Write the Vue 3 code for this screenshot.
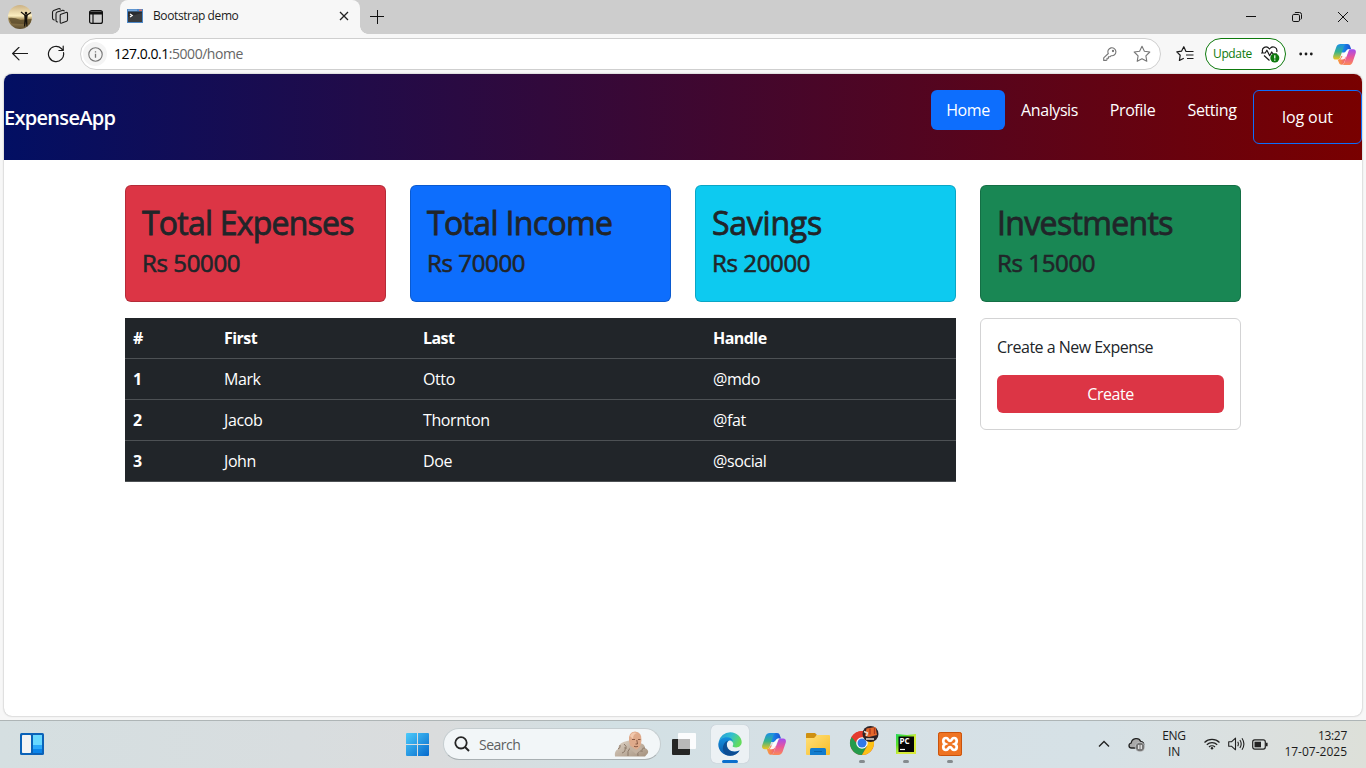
<script setup>
const cards = [
  { title: 'Total Expenses', value: 'Rs 50000', tone: 'danger' },
  { title: 'Total Income', value: 'Rs 70000', tone: 'primary' },
  { title: 'Savings', value: 'Rs 20000', tone: 'cyan' },
  { title: 'Investments', value: 'Rs 15000', tone: 'success' },
]
const rows = [
  ['1', 'Mark', 'Otto', '@mdo'],
  ['2', 'Jacob', 'Thornton', '@fat'],
  ['3', 'John', 'Doe', '@social'],
]
</script>

<template>
  <div class="screen">
    <svg class="defs" width="0" height="0" aria-hidden="true">
      <defs>
        <linearGradient id="cpA" x1="0" y1="0" x2="0" y2="1">
          <stop offset="0" stop-color="#1b8fe8" /><stop offset=".5" stop-color="#35b38a" /><stop offset="1" stop-color="#f5c51c" />
        </linearGradient>
        <linearGradient id="cpB" x1="0" y1="0" x2="0" y2="1">
          <stop offset="0" stop-color="#a24cf0" /><stop offset=".5" stop-color="#e8569c" /><stop offset="1" stop-color="#fb8a55" />
        </linearGradient>
        <linearGradient id="cpC" x1="0" y1="0" x2="1" y2="0">
          <stop offset="0" stop-color="#1798ec" /><stop offset="1" stop-color="#1c50d4" />
        </linearGradient>
        <linearGradient id="cpD" x1="0" y1="0" x2="1" y2="0">
          <stop offset="0" stop-color="#f9a13c" /><stop offset="1" stop-color="#ef5a78" />
        </linearGradient>
        <symbol id="copilot" viewBox="0 0 24 22">
          <path d="M8 0h7c1.600 0 2.400.8 2.800 2.200L19 5.500h-2.500c-1.500 0-2.300.8-2.800 2.300l-.4 1.200L9 9z" fill="url(#cpC)" />
          <path d="M8 0h5.500C12 .7 11.500 2 11 3.500L7.500 14c-.5 1.500-1.300 2.300-3 2.300H2.800C.5 16.300-.4 14.500.3 12L3.500 3C4.300 1 5.600 0 8 0z" fill="url(#cpA)" />
          <path d="M4.800 16.300c1.900 0 2.800-.8 3.300-2.500l.5-1.300 5.200.5L12 18.500c-.6 1.800-1.400 3-3 3.300-1.500 0-2.300-.6-2.700-1.800z" fill="url(#cpD)" />
          <path d="M19 5.500h2.200c2.300 0 3.200 1.800 2.500 4.200L20.700 18.500c-.8 2.300-2.100 3.500-4.500 3.500H9c2-.3 2.500-1.700 3.100-3.500L16 8c.5-1.600 1.300-2.500 3-2.500z" fill="url(#cpB)" />
          <path d="M14.200 7c.4-.8 1.200-1.500 2.800-1.500-1.500 1.500-3.200 8.500-4.600 9.700-.6.800-1.600 1.100-4.900 1.100 2-2 3.700-7.700 6.700-9.300z" fill="#fff" opacity=".92" />
        </symbol>
        <linearGradient id="win" x1="0" y1="0" x2="1" y2="1">
          <stop offset="0" stop-color="#4ccbfb" /><stop offset="1" stop-color="#0669cc" />
        </linearGradient>
        <linearGradient id="edgeA" x1="0" y1="0" x2="1" y2=".4">
          <stop offset="0" stop-color="#2598d8" /><stop offset=".55" stop-color="#32bfd0" /><stop offset="1" stop-color="#63dc5c" />
        </linearGradient>
        <linearGradient id="edgeB" x1="0" y1="0" x2="0" y2="1">
          <stop offset="0" stop-color="#1490df" /><stop offset="1" stop-color="#0a58a8" />
        </linearGradient>
        <linearGradient id="fold" x1="0" y1="0" x2="1" y2="1">
          <stop offset="0" stop-color="#ffe07a" /><stop offset="1" stop-color="#f8bd28" />
        </linearGradient>
        <linearGradient id="pc" x1="0" y1="0" x2="1" y2="1">
          <stop offset="0" stop-color="#21d759" /><stop offset=".3" stop-color="#5be32c" /><stop offset=".55" stop-color="#d5ee39" /><stop offset="1" stop-color="#d9e83a" />
        </linearGradient>
        <linearGradient id="sky" x1="0" y1="0" x2="0" y2="1">
          <stop offset="0" stop-color="#cbb184" /><stop offset=".45" stop-color="#fbeec0" /><stop offset=".6" stop-color="#a58d58" /><stop offset="1" stop-color="#5e4e30" />
        </linearGradient>
        <linearGradient id="fur" x1="0" y1="0" x2="1" y2="1">
          <stop offset="0" stop-color="#ded3c6" /><stop offset="1" stop-color="#a4917e" />
        </linearGradient>
      </defs>
    </svg>

    <header class="tabstrip">
      <div class="slot w40">
        <svg width="24" height="24" viewBox="0 0 24 24">
          <circle cx="12" cy="12" r="12" fill="url(#sky)" />
          <path d="M.5 13q5-1 12 2l11-1a12 12 0 0 1-2 5.500l-18-1z" fill="#5a4a2a" opacity=".75" />
          <path d="M13 7l4 3.200 1.500.1L23 7.500" stroke="#15110c" stroke-width="1.200" fill="none" />
          <path d="M16.200 9.500h3.600l-.6 5 .3 7h-1l-.7-5-.7 5h-1.200l.6-7z" fill="#15110c" />
          <circle cx="18" cy="8" r="1.300" fill="#15110c" />
        </svg>
      </div>
      <div class="slot w40">
        <svg width="18" height="18" viewBox="0 0 18 18" fill="none" stroke="#1b1b1b" stroke-width="1.100" stroke-linejoin="round" stroke-linecap="round">
          <path d="M9.200 7.300q0-.8.800-1.100l5-1.700q1.500-.4 1.500 1v6.300q0 1-.9 1.400l-4.800 1.900q-1.600.5-1.600-1z" />
          <path d="M6.600 14q-1.600-.3-1.600-1.600V6q0-1.400 1.200-1.900l5-1.700q1.400-.4 2 .5" />
          <path d="M3.200 12Q1.500 11.600 1.500 10V4.200q0-1.300 1.200-1.800l4.600-1.600q1.400-.4 2 .4" />
        </svg>
      </div>
      <div class="slot w32">
        <svg width="16" height="16" viewBox="0 0 16 16" fill="none" stroke="#111" stroke-width="1.200">
          <rect x="1.600" y="1.600" width="12.800" height="12.800" rx="2" />
          <path d="M2 3h12v2H2z" fill="#111" /><path d="M5 5v9.500" />
        </svg>
      </div>
      <div class="tab">
        <svg width="16" height="14" viewBox="0 0 16 14">
          <rect width="16" height="14" fill="#4d88c8" /><rect x="1" y="2.500" width="14" height="10.500" fill="#2a2c30" />
          <path d="M1 8l14-4v9H1z" fill="#414448" opacity=".7" /><rect x="12" y=".6" width="3" height="1.300" fill="#e86c5c" />
          <path d="M1 1.200h9" stroke="#9bc2ea" stroke-width=".8" /><path d="M3 5l2.200 1.500L3 8" stroke="#fff" stroke-width="1.200" fill="none" />
        </svg>
        <span class="tab-title">Bootstrap demo</span>
        <svg width="10" height="10" viewBox="0 0 10 10" stroke="#222" stroke-width="1.300"><path d="M1 1l8 8M9 1L1 9" /></svg>
      </div>
      <div class="slot w34">
        <svg width="14" height="14" viewBox="0 0 14 14" stroke="#111" stroke-width="1"><path d="M7.500 0v14M0 6.500h14" /></svg>
      </div>
      <div class="grow"></div>
      <div class="slot w46"><svg width="10" height="10" viewBox="0 0 10 10" stroke="#111"><path d="M0 4.500h10" /></svg></div>
      <div class="slot w46">
        <svg width="10" height="10" viewBox="0 0 10 10" fill="none" stroke="#111"><rect x=".5" y="2.500" width="7" height="7" rx="1.300" /><path d="M2.500 1.200Q2.800.5 4 .5h3.500a2 2 0 0 1 2 2V6q0 1-.8 1.500" /></svg>
      </div>
      <div class="slot w46"><svg width="10" height="10" viewBox="0 0 10 10" stroke="#111"><path d="M0 0l10 10M10 0L0 10" /></svg></div>
    </header>

    <div class="toolbar">
      <div class="slot w40">
        <svg width="16" height="14" viewBox="0 0 16 14" fill="none" stroke="#1b1b1b" stroke-width="1.200" stroke-linecap="round"><path d="M15.500 6.500H.8M7 .3L.7 6.500 7 12.800" /></svg>
      </div>
      <div class="slot w32">
        <svg width="18" height="18" viewBox="0 0 18 18" fill="none" stroke="#1b1b1b" stroke-width="1.200" stroke-linecap="round"><path d="M16.500 7.500A7.600 7.600 0 1 1 14.300 3.500L16 5.300M16.200 1.200v4.300h-4.300" /></svg>
      </div>
      <div class="address">
        <span class="site-info">
          <svg width="15" height="15" viewBox="0 0 15 15" fill="none" stroke="#767676" stroke-width="1.100"><circle cx="7.500" cy="7.500" r="6.700" /><path d="M7.500 6.700v4M7.500 4.200v1.300" stroke-width="1.300" /></svg>
        </span>
        <span class="url"><b>127.0.0.1</b>:5000/home</span>
        <div class="grow"></div>
        <svg width="14" height="14" viewBox="0 0 14 14" fill="none" stroke="#767676" stroke-width="1.100" stroke-linejoin="round"><path d="M5.300 6.500A4 4 0 1 1 8.200 8.700L7 9.800H5.500v1.500H4v1.500l-.7.600H.7v-2.500z" /><circle cx="10" cy="4" r=".6" /></svg>
        <svg class="star" width="18" height="18" viewBox="0 0 18 18" fill="none" stroke="#767676" stroke-width="1.100" stroke-linejoin="round"><path d="M9 1.200l2.400 5 5.400.8-3.900 3.800.9 5.500L9 13.700l-4.800 2.600.9-5.500L1.200 7l5.400-.8z" /></svg>
      </div>
      <div class="slot w32 fav">
        <svg width="18" height="18" viewBox="0 0 18 18" fill="none" stroke="#1b1b1b" stroke-width="1.200" stroke-linejoin="round"><path d="M17.500 6.500H10L7.800 1.700 5.500 6.200l-4.700.7 3.400 3.300-.8 5.300 4.400-2.300M10 10h7.500M11 13.500h6.500" /></svg>
      </div>
      <div class="update">
        <span>Update</span>
        <svg width="19" height="17" viewBox="0 0 19 17" fill="none" stroke="#1b1b1b" stroke-width="1.200" stroke-linejoin="round">
          <path d="M1.700 6.500C0 1.500 5.500-1 8.500 3 11.500-1 17 1.500 15.700 6M3 9.500l5.500 5M0 7h4.200l1.700-2.800 2.800 5.500 2-3.700 1.400 2H16" />
          <circle cx="13.800" cy="12" r="4.500" fill="#0e7a0d" stroke="none" /><path d="M13.800 9.200v3.200M13.800 13.500v1.200" stroke="#fff" />
        </svg>
      </div>
      <div class="slot w40"><svg width="14" height="4" viewBox="0 0 14 4" fill="#1b1b1b"><circle cx="1.700" cy="2" r="1.400" /><circle cx="7" cy="2" r="1.400" /><circle cx="12.300" cy="2" r="1.400" /></svg></div>
      <div class="slot w36"><svg width="23" height="21"><use href="#copilot" /></svg></div>
    </div>

    <main class="page">
      <nav class="navbar">
        <span class="brand">ExpenseApp</span>
        <div class="pills">
          <a class="pill active">Home</a><a class="pill">Analysis</a><a class="pill">Profile</a><a class="pill">Setting</a><a class="logout">log out</a>
        </div>
      </nav>
      <div class="container">
        <section v-for="c in cards" :key="c.title" class="card" :class="c.tone">
          <h2>{{ c.title }}</h2>
          <h4>{{ c.value }}</h4>
        </section>
        <table class="table">
          <colgroup><col class="c1" /><col class="c2" /><col class="c3" /><col class="c4" /></colgroup>
          <thead><tr><th>#</th><th>First</th><th>Last</th><th>Handle</th></tr></thead>
          <tbody>
            <tr v-for="r in rows" :key="r[0]"><th>{{ r[0] }}</th><td>{{ r[1] }}</td><td>{{ r[2] }}</td><td>{{ r[3] }}</td></tr>
          </tbody>
        </table>
        <section class="create">
          <p>Create a New Expense</p>
          <button>Create</button>
        </section>
      </div>
    </main>

    <footer class="taskbar">
      <div class="left">
        <svg width="24" height="22" viewBox="0 0 24 22"><rect width="24" height="22" rx="1.500" fill="#0b62b8" /><rect x="2" y="2" width="9" height="18" rx=".8" fill="#f4f4f4" /><rect x="13" y="2" width="9" height="10" fill="#68d8ff" /><rect x="13" y="12" width="9" height="4" fill="#2aa8fa" /><rect x="13" y="16" width="9" height="4" fill="#0a84ea" /></svg>
      </div>
      <div class="slot start"><svg width="23" height="23" viewBox="0 0 23 23" fill="url(#win)"><path d="M1 0h10v11H0V1q0-1 1-1zM12 0h10q1 0 1 1v10H12zM0 12h11v11H1q-1 0-1-1zM12 12h11v10q0 1-1 1H12z" /></svg></div>
      <div class="search">
        <svg width="16" height="16" viewBox="0 0 16 16" fill="none" stroke="#252525" stroke-width="1.800"><circle cx="7" cy="6.800" r="5.700" /><path d="M11 11l4 4" stroke-width="2" /></svg>
        <span>Search</span>
        <svg class="sage" width="35" height="26" viewBox="0 0 35 26">
          <path d="M1 25.500Q0 20 4 18q1-7 9-8l4-1 9 3q5 1 5 5 4 2 3 5l-3 3.500z" fill="url(#fur)" />
          <path d="M4 18q3-1 2-4M8 22q4-1 3-6M14 25q-1-5 2-8M27 20q-4-1-3 5M31 17q-4 0-3 4M10 13q3 2 2 5" stroke="#8b7868" stroke-width="1" fill="none" />
          <path d="M15 10Q14 1 21 .5q7 .5 6.500 8.500Q27 17 22.500 19 16 19 15 10z" fill="#dfaa8b" />
          <path d="M16 5Q18 0 23 2q-4 1-4 6z" fill="#f2c9ae" />
          <path d="M18 8.500h3M24 8.500h2.500M22.800 9l.7 4h-2M20 15.300q2 1 4 0" stroke="#80513c" stroke-width=".9" fill="none" />
          <path d="M15 17l7 6 6-5-1-3-4.500 4-6-4z" fill="#c3b1a0" />
        </svg>
      </div>
      <div class="slot taskview"><svg width="24" height="24" viewBox="0 0 24 24"><rect y="7" width="18" height="16" rx="1" fill="#252625" /><rect x="6" y="1" width="18" height="16" rx="1" fill="#fff" opacity=".9" /><path d="M6 7h12v10H6z" fill="#b9b9b9" /></svg></div>
      <div class="slot app focus">
        <svg width="24" height="24" viewBox="0 0 24 24">
          <path d="M.6 10A11.800 11.800 0 0 1 12.300.2C19 .2 23.900 5.500 23.700 10.300c-.2 3.300-2.700 5.200-5.500 5.200-2.700 0-4-.8-3.500-1.700.7-1 .8-2.300-.1-3.500C12 7 5 5 .6 10z" fill="url(#edgeA)" />
          <path d="M.3 12C.8 7.500 5 5.200 9 5.200c3 0 5.200 1.600 6 3.800-3-2-6.500.5-6.300 4.500.2 5 5.500 7.500 12.800 5-2 3.200-5 5.300-9.300 5.300C5.200 23.800 0 18.500.3 12z" fill="url(#edgeB)" />
          <path d="M8 23C3 19 4 11 10 8.500c-2.500 3.500-1 9 4 11 2.500 1 5.500.3 7.800-1.300-2.500 4.500-8 6.700-13.800 4.800z" fill="#0c4a8e" opacity=".85" />
        </svg>
        <i class="mark"></i>
      </div>
      <div class="slot app"><svg width="24" height="22"><use href="#copilot" /></svg></div>
      <div class="slot app">
        <svg width="24" height="22" viewBox="0 0 24 22"><path d="M0 1q0-1 1-1h8l2 2h-.5V5H0z" fill="#cf9011" /><path d="M0 5h8l3-3h12q1 0 1 1v18q0 1-1 1H1q-1 0-1-1z" fill="url(#fold)" /><path d="M4 22v-5.500Q4 15 5.500 15h13q1.500 0 1.500 1.500V22z" fill="#127cce" /><path d="M8 18.500h8" stroke="#0864ad" /></svg>
      </div>
      <div class="slot app">
        <svg class="chrome" width="30" height="30" viewBox="0 0 30 30">
          <circle cx="13" cy="17" r="12" fill="#e43b2e" />
          <path d="M2.600 11a12 12 0 0 0 10.400 18l5.200-9.500L13 17z" fill="#249b4b" /><path d="M13 29a12 12 0 0 0 10.400-18L13 11.500l5.200 8.500z" fill="#fbc116" />
          <path d="M2.600 11A12 12 0 0 1 23.400 11H13q-5 0-5.500 6z" fill="#e43b2e" />
          <circle cx="13" cy="17" r="5.800" fill="#fff" /><circle cx="13" cy="17" r="4.500" fill="#3079e8" />
          <circle cx="21.500" cy="8" r="8" fill="#2b2227" />
          <path d="M17.500 2.500l9-1.500 1.500 8-8 2-4-1z" fill="#e5672b" />
          <path d="M15 5.500l3.500 1.500-1 3M17 13h8" stroke="#e8dcd4" stroke-width="1.400" fill="none" />
          <path d="M21 2.500v6M25.500 2v6" stroke="#a9381b" stroke-width="1.300" />
        </svg>
        <i class="dot"></i>
      </div>
      <div class="slot app">
        <svg width="22" height="22" viewBox="0 0 22 22"><path d="M1 1l11 1 9-1v20H1z" fill="url(#pc)" /><rect x="3.500" y="3.500" width="15.500" height="15.500" fill="#050505" /><text x="4.500" y="11" class="pc">PC</text><path d="M5 16.500h5" stroke="#fff" stroke-width="1.200" /></svg>
        <i class="dot"></i>
      </div>
      <div class="slot app">
        <svg width="24" height="24" viewBox="0 0 24 24"><rect width="24" height="24" rx="2.500" fill="#ef7423" /><rect x=".5" y=".5" width="23" height="23" rx="2" fill="none" stroke="#c9530d" /><path d="M8 6C10.800 6 9.800 8.800 12 8.800S13.200 6 16 6c3.500 0 3.500 4.800.8 6 2.700 1.200 2.700 6-.8 6-2.800 0-1.800-2.800-4-2.800S10.800 18 8 18c-3.500 0-3.500-4.800-.8-6C4.500 10.800 4.500 6 8 6z" fill="none" stroke="#fff" stroke-width="2.700" /></svg>
        <i class="dot"></i>
      </div>
      <div class="grow"></div>
      <div class="slot w32"><svg width="12" height="8" viewBox="0 0 12 8" fill="none" stroke="#222" stroke-width="1.400"><path d="M1 6.500l5-5 5 5" /></svg></div>
      <div class="slot w32">
        <svg width="17" height="15" viewBox="0 0 17 15"><path d="M3.500 11C.5 11 0 7 3.200 6 4 1 11 0 12.500 4.300c2.500 0 4 2.500 3 5L10 11z" fill="#aaa" stroke="#222" stroke-width="1.300" /><circle cx="12" cy="10" r="4.800" fill="#777" stroke="#dde3e5" stroke-width=".6" /><path d="M10.800 8v4M13.200 8v4" stroke="#fff" stroke-width="1.100" /></svg>
      </div>
      <div class="lang"><span>ENG</span><span>IN</span></div>
      <div class="slot w24">
        <svg width="16" height="12" viewBox="0 0 16 12" fill="none" stroke="#222" stroke-width="1.200"><path d="M.5 4.500a10.500 10.500 0 0 1 15 0M2.800 6.800a7.400 7.400 0 0 1 10.400 0M5 9a4.200 4.200 0 0 1 6 0" /><circle cx="8" cy="10.300" r="1.200" fill="#222" stroke="none" /></svg>
      </div>
      <div class="slot w24">
        <svg width="17" height="14" viewBox="0 0 17 14" fill="none" stroke="#222" stroke-width="1.100" stroke-linejoin="round"><path d="M.7 4.700h3L7.500 1.200v11.600L3.700 9.300h-3zM9.700 4.700q1.400 2.300 0 4.600M11.900 3q2.600 4 0 8M14 1.300q3.800 5.700 0 11.400" /></svg>
      </div>
      <div class="slot w24">
        <svg width="16" height="11" viewBox="0 0 16 11" fill="none" stroke="#222" stroke-width="1.200"><rect x=".7" y=".9" width="12.600" height="9.200" rx="2" /><rect x="2.500" y="2.700" width="6.500" height="5.600" fill="#222" stroke="none" /><path d="M14.800 3.800v3.400" stroke-width="1.600" /></svg>
      </div>
      <div class="clock"><span>13:27</span><span class="date">17-07-2025</span></div>
    </footer>
  </div>
</template>

<style>
body { margin: 0; overflow: hidden; }
</style>

<style scoped>
* { box-sizing: border-box; }
.screen { width: 1366px; height: 768px; display: flex; flex-direction: column; background: #f7f7f7; font-family: "Open Sans", "Noto Sans", sans-serif; color: #212529; overflow: hidden; }
.defs { position: absolute; }
svg { display: block; flex: none; }
.slot { display: flex; align-items: center; justify-content: center; flex: none; }
.w24 { width: 24px; } .w32 { width: 32px; } .w34 { width: 34px; } .w36 { width: 36px; } .w40 { width: 40px; } .w46 { width: 46px; }
.grow { flex: 1; }

.tabstrip { height: 34px; display: flex; background: #cdcdcd; flex: none; }
.tabstrip .slot { height: 33px; }
.tab { position: relative; width: 240px; margin-left: 8px; padding: 0 11px 2px 7px; display: flex; align-items: center; background: #f7f7f7; border-radius: 8px 8px 0 0; font-size: 12px; color: #1b1b1b; }
.tab::before, .tab::after { content: ""; position: absolute; bottom: 0; width: 8px; height: 8px; }
.tab::before { left: -8px; background: radial-gradient(circle at 0 0, transparent 7.500px, #f7f7f7 8px); }
.tab::after { right: -8px; background: radial-gradient(circle at 100% 0, transparent 7.500px, #f7f7f7 8px); }
.tab-title { margin-left: 10px; flex: 1; padding-bottom: 1px; white-space: nowrap; letter-spacing: -0.390px; }

.toolbar { height: 40px; display: flex; align-items: center; flex: none; }
.address { width: 1081px; height: 32px; margin-left: 8px; padding: 0 9px 0 2px; display: flex; align-items: center; background: #fff; border: 1px solid #cfcfcf; border-radius: 16px; }
.site-info { width: 24px; height: 24px; border-radius: 50%; background: #f4f4f4; display: flex; align-items: center; justify-content: center; }
.url { margin-left: 7px; padding-bottom: 2px; font-size: 14px; color: #666; letter-spacing: -0.470px; white-space: nowrap; }
.url b { font-weight: 400; color: #000; }
.star { margin-left: 16px; }
.fav { margin-left: 8px; }
.update { width: 81px; height: 32px; margin-left: 4px; padding: 0 5px 0 7px; display: flex; align-items: center; justify-content: space-between; border: 1px solid #0e7a0d; border-radius: 16px; background: #fff; font-size: 12px; color: #0e7a0d; letter-spacing: -0.360px; }
.update span { padding-bottom: 2px; }

.page { height: 642px; margin: 0 4px; background: #fff; border-radius: 8px; overflow: hidden; box-shadow: 0 0 2px rgba(0, 0, 0, .35); flex: none; }
.navbar { height: 86px; display: flex; justify-content: space-between; background: linear-gradient(90deg, #020f63, #790000); font-size: 16px; color: #fff; }
.brand { align-self: center; padding-top: 1px; font-size: 20px; font-weight: 600; letter-spacing: -0.700px; }
.pills { display: grid; grid-template-columns: 74px 89px 77px 82px 109px; align-items: start; padding-top: 16px; letter-spacing: -0.400px; }
.pill { height: 40px; line-height: 40px; text-align: center; border-radius: 6px; }
.active { background: #0d6efd; }
.logout { height: 54px; line-height: 53px; text-align: center; border: 1px solid #0d6efd; border-radius: 6px; letter-spacing: -0.100px; }

.container { width: 1116px; margin: 25px auto 0; display: grid; grid-template-columns: repeat(4, 261px); gap: 16px 24px; align-items: start; }
.card { height: 117px; padding: 16px; border: 1px solid rgba(0, 0, 0, .175); border-radius: 6px; }
.card h2 { margin: 2px 0 6px; font-size: 32px; line-height: 38px; font-weight: 400; letter-spacing: -0.780px; white-space: nowrap; -webkit-text-stroke: 0.800px #212529; }
.card h4 { margin: 0; font-size: 24px; line-height: 29px; font-weight: 400; letter-spacing: -0.370px; -webkit-text-stroke: 0.600px #212529; }
.danger { background: #dc3545; } .primary { background: #0d6efd; } .cyan { background: #0dcaf0; } .success { background: #198754; }
.cyan h2 { letter-spacing: -0.250px; }
.primary h2, .success h2 { letter-spacing: -0.650px; }

.table { grid-column: span 3; width: 831px; table-layout: fixed; border-collapse: collapse; background: #212529; color: #fff; font-size: 16px; line-height: 24px; letter-spacing: -0.400px; }
.c1 { width: 91px; } .c2 { width: 199px; } .c3 { width: 290px; } .c4 { width: 251px; }
.table th, .table td { height: 41px; padding: 0 8px 2px; text-align: left; box-shadow: inset 0 -1px #4d5154; }
.table th { font-weight: 700; letter-spacing: -0.550px; }
.create { height: 112px; padding: 16px; border: 1px solid #d3d3d4; border-radius: 6px; }
.create p { margin: 0 0 16px; font-size: 16px; line-height: 24px; letter-spacing: -0.520px; }
.create button { display: block; width: 100%; height: 38px; padding: 0; border: 0; border-radius: 6px; background: #dc3545; color: #fff; font: 16px "Open Sans", sans-serif; letter-spacing: -0.450px; }

.taskbar { height: 48px; margin-top: 4px; padding-bottom: 1px; display: flex; align-items: center; border-top: 1px solid #aeb5b6; background: linear-gradient(90deg, #d5dfe1, #d8dddf 22%, #dadcdd 32%, #d2e0e4 45%, #d6e0e5 60%, #d6e1e6 80%, #dbe0df 92%, #dde0d9); flex: none; }
.left { width: 401px; padding-left: 20px; }
.start { width: 33px; }
.search { width: 218px; height: 32px; margin-left: 9px; padding: 0 11px 0 10px; display: flex; align-items: center; border: 1px solid #c5cdd0; border-bottom-color: #a9b0b3; border-radius: 16px; background: #f2f6f8; font-size: 14px; color: #5d5f61; }
.search span { margin-left: 9px; letter-spacing: -0.500px; }
.search { margin-right: -1px; }
.sage { margin-left: auto; }
.taskview { width: 44px; margin: 0 2px; }
.app { position: relative; width: 38px; height: 38px; margin: 0 3px; border-radius: 5px; }
.focus { background: #ecf1f4; box-shadow: 0 0 1px #aab; }
.mark, .dot { position: absolute; bottom: 0; left: 50%; transform: translateX(-50%); height: 3px; border-radius: 2px; }
.mark { width: 16px; background: #0a6fcd; }
.dot { width: 6px; background: #858b8e; }
.chrome { margin: -6px 0 0 4px; }
.pc { font: 700 8px "Open Sans", sans-serif; fill: #fff; }
.lang { width: 48px; margin: 0 2px 0 -2px; display: flex; flex-direction: column; align-items: center; }
.lang, .clock { font-size: 12px; line-height: 16px; color: #1b1b1b; letter-spacing: -0.300px; }
.clock { width: 75px; margin-right: 19px; padding-bottom: 1px; display: flex; flex-direction: column; align-items: flex-end; }
.lang span, .clock span { white-space: nowrap; }
.clock .date { letter-spacing: 0; }
</style>
